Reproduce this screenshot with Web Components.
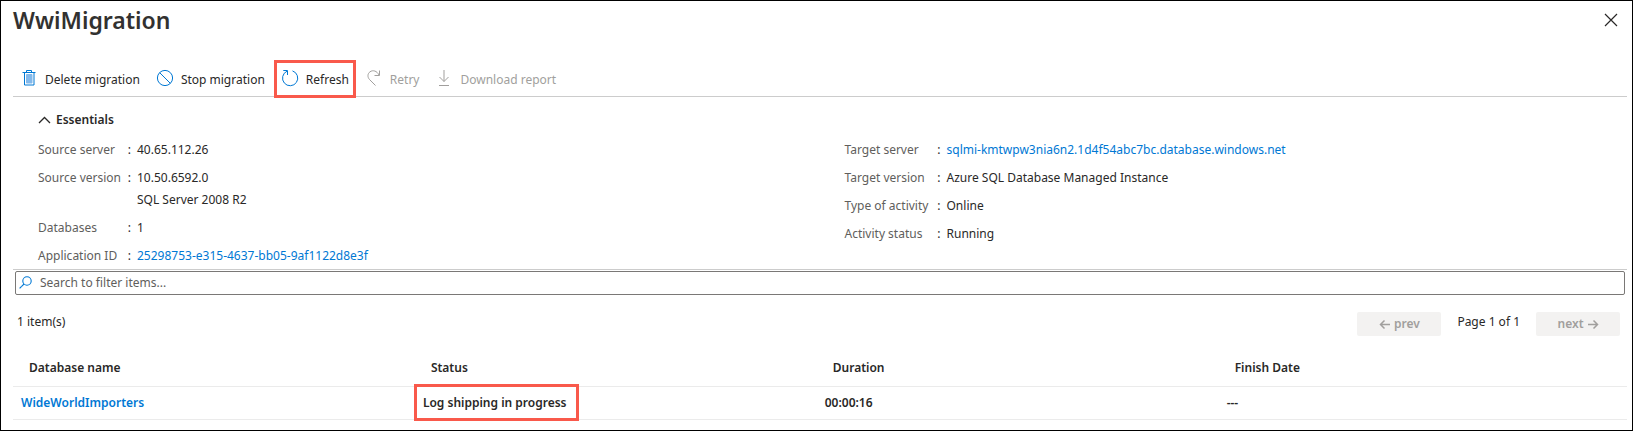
<!DOCTYPE html>
<html lang="en">
<head>
<meta charset="utf-8">
<meta name="viewport" content="width=device-width, initial-scale=1">
<title>WwiMigration</title>
<style>
  :root {
    --text: #292827;
    --muted: #605e5c;
    --disabled: #a19f9d;
    --link: #0078d4;
    --rule: #cccccc;
    --row-rule: #ebebeb;
    --callout: #f9594b;
  }
  * { box-sizing: border-box; }
  body {
    margin: 0;
    background: #fff;
    color: var(--text);
    font: 12px/20px "Noto Sans", "Open Sans", sans-serif;
  }
</style>
</head>
<body>
<migration-blade>
  <span slot="title">WwiMigration</span>
  <command-bar slot="commands">
    <command-button icon="trash">Delete migration</command-button>
    <command-button icon="stop">Stop migration</command-button>
    <command-button icon="refresh" callout>Refresh</command-button>
    <command-button icon="retry" disabled>Retry</command-button>
    <command-button icon="download" disabled>Download report</command-button>
  </command-bar>
  <essentials-panel></essentials-panel>
  <filter-box></filter-box>
  <list-pager></list-pager>
  <database-table></database-table>
</migration-blade>

<template id="migration-blade">
  <style>
    :host { display: block; min-height: 100vh; box-sizing: border-box; border: 1px solid #000; padding: 0 5px 0 12px; }
    header { display: flex; justify-content: space-between; align-items: flex-start; height: 62px; padding-right: 8px; }
    h1 { margin: 0; padding-top: 2px; font-size: 23px; line-height: 34px; font-weight: 600; color: #323130; }
    button { margin: 11px 0 0; padding: 1px; border: 0; background: none; display: flex; }
    svg { width: 14px; height: 14px; }
  </style>
  <header>
    <h1><slot name="title"></slot></h1>
    <button type="button" aria-label="Close"><svg viewBox="0 0 14 14"><path d="M1 1l12 12M13 1L1 13" fill="none" stroke="#292827" stroke-width="1.2"/></svg></button>
  </header>
  <slot name="commands"></slot>
  <main><slot></slot></main>
</template>

<template id="command-bar">
  <style>
    :host { display: block; }
    nav { display: flex; gap: 2px; height: 33px; border-bottom: 1px solid var(--rule); }
  </style>
  <nav aria-label="Commands"><slot></slot></nav>
</template>

<template id="command-button">
  <style>
    :host { display: block; position: relative; }
    button {
      display: flex; align-items: center; gap: 7px; height: 34px; margin: 0; padding: 0 7px;
      border: 0; background: none; color: inherit; font: inherit; white-space: nowrap;
    }
    button:disabled { color: var(--disabled); }
    svg { width: 18px; height: 18px; margin-bottom: 4px; color: var(--link); fill: none; stroke: currentColor; }
    button:disabled svg { color: var(--disabled); }
    :host([callout])::after {
      content: ""; position: absolute; inset: -3px 0 -2px; border: 3px solid var(--callout); pointer-events: none;
    }
  </style>
  <button type="button"><svg viewBox="0 0 18 18" aria-hidden="true"></svg><span><slot></slot></span></button>
</template>

<template id="essentials-panel">
  <style>
    :host { display: block; padding: 13px 0 0 25px; border-bottom: 1px solid var(--rule); }
    h2 { margin: 0; font-size: 12px; line-height: 20px; font-weight: 600; }
    h2 button { display: flex; align-items: center; gap: 5px; margin: 0; padding: 0; border: 0; background: none; color: inherit; font: inherit; }
    svg { width: 13px; height: 13px; }
    .columns { display: grid; grid-template-columns: 1fr 1fr; column-gap: 24px; padding-top: 6px; }
    dl { margin: 0; }
    .row { display: flex; line-height: 22px; padding: 3px 0; }
    .row:last-child { padding-bottom: 2px; }
    dt { display: flex; justify-content: space-between; width: 93px; color: var(--muted); }
    dl.target dt { width: 96px; }
    dt::after { content: ":"; color: var(--text); }
    dd { margin: 0 0 0 6px; }
    a { color: var(--link); text-decoration: none; }
  </style>
  <h2><button type="button" aria-expanded="true"><svg viewBox="0 0 13 13" aria-hidden="true"><path d="M1 9L6.500 3.500 12 9" fill="none" stroke="#292827" stroke-width="1.300"/></svg>Essentials</button></h2>
  <div class="columns">
    <dl class="source">
      <div class="row"><dt>Source server</dt><dd>40.65.112.26</dd></div>
      <div class="row"><dt>Source version</dt><dd>10.50.6592.0<br>SQL Server 2008 R2</dd></div>
      <div class="row"><dt>Databases</dt><dd>1</dd></div>
      <div class="row"><dt>Application ID</dt><dd><a href="#application">25298753-e315-4637-bb05-9af1122d8e3f</a></dd></div>
    </dl>
    <dl class="target">
      <div class="row"><dt>Target server</dt><dd><a href="#server">sqlmi-kmtwpw3nia6n2.1d4f54abc7bc.database.windows.net</a></dd></div>
      <div class="row"><dt>Target version</dt><dd>Azure SQL Database Managed Instance</dd></div>
      <div class="row"><dt>Type of activity</dt><dd>Online</dd></div>
      <div class="row"><dt>Activity status</dt><dd>Running</dd></div>
    </dl>
  </div>
</template>

<template id="filter-box">
  <style>
    :host { display: block; padding: 1px 2px 0; }
    label { display: flex; align-items: center; gap: 8px; height: 24px; box-sizing: border-box; padding: 0 3px; border: 1px solid #7a7876; border-radius: 2px; }
    svg { width: 13px; height: 13px; flex: none; margin-bottom: 2px; }
    input { flex: 1; min-width: 0; margin: 0; padding: 0; border: 0; outline: 0; background: none; font: inherit; color: inherit; }
    input::placeholder { color: var(--muted); opacity: 1; }
  </style>
  <label>
    <svg viewBox="0 0 13 13" aria-hidden="true"><g fill="none" stroke="#0078d4" stroke-width="1.100"><circle cx="8" cy="5" r="4.200"/><path d="M5 8L.6 12.400"/></g></svg>
    <input type="text" aria-label="Search to filter items" placeholder="Search to filter items...">
  </label>
</template>

<template id="list-pager">
  <style>
    :host { display: flex; justify-content: space-between; padding: 17px 7px 0 4px; }
    .count, .page { line-height: 20px; }
    .pages { display: flex; gap: 16px; }
    button {
      display: flex; align-items: center; justify-content: center; gap: 4px; width: 84px; height: 24px; margin: 0; padding: 0;
      border: 0; border-radius: 2px; background: #f3f2f1; color: var(--disabled); font: inherit; font-weight: 600;
    }
    svg { width: 11px; height: 11px; fill: none; stroke: currentColor; stroke-width: 1.500; }
  </style>
  <span class="count">1 item(s)</span>
  <div class="pages">
    <button type="button" disabled><svg viewBox="0 0 11 11" aria-hidden="true"><path d="M11 5.500H1.500M5.500 1.500l-4 4 4 4"/></svg>prev</button>
    <span class="page">Page 1 of 1</span>
    <button type="button" disabled>next<svg viewBox="0 0 11 11" aria-hidden="true"><path d="M0 5.500h9.500M5.500 1.500l4 4-4 4"/></svg></button>
  </div>
</template>

<template id="database-table">
  <style>
    :host { display: block; padding-top: 14px; }
    table { width: 100%; border-collapse: separate; border-spacing: 0; table-layout: fixed; }
    th, td { padding: 0; text-align: left; font-weight: 600; color: var(--text); }
    th { height: 36px; padding-left: 16px; border-bottom: 1px solid var(--row-rule); }
    td { height: 32px; padding-left: 8px; border-bottom: 1px solid var(--row-rule); }
    col.data { width: 24.9%; }
    a { color: var(--link); text-decoration: none; }
    .status { position: relative; }
    .status::after { content: ""; position: absolute; inset: -10px -12px -10px -9px; border: 3px solid var(--callout); pointer-events: none; }
  </style>
  <table>
    <colgroup><col class="data"><col class="data"><col class="data"><col></colgroup>
    <thead><tr><th scope="col">Database name</th><th scope="col">Status</th><th scope="col">Duration</th><th scope="col">Finish Date</th></tr></thead>
    <tbody><tr><td><a href="#database">WideWorldImporters</a></td><td><span class="status">Log shipping in progress</span></td><td>00:00:16</td><td>---</td></tr></tbody>
  </table>
</template>

<script>
  const icons = {
    trash: '<path d="M4.500 4v12h9.500V4M2.500 3.500h13M6.500 3V1.500h5V3"/><path d="M6.500 5.500h5.500v8.500H6.500z" fill="#83b9eb" stroke="#83b9eb"/>',
    stop: '<circle cx="9" cy="9" r="7.600"/><path d="M3.600 3.600l10.800 10.800"/>',
    refresh: '<path d="M11.500 1.900A7.600 7.600 0 1 1 6 2.200M2.300 1.500H6.500V6"/>',
    retry: '<path d="M10.500 16.500L4.500 10.500C2.200 8 2.600 4.500 5 2.800 8 .600 12 2 14 6M14.500 1.500V6.500H9.500"/>',
    download: '<path d="M9 1v11.500M4.500 8L9 12.500 13.500 8M4 16.500h10"/>'
  };

  class TemplateElement extends HTMLElement {
    constructor() {
      super();
      this.attachShadow({ mode: "open" })
        .append(document.getElementById(this.localName).content.cloneNode(true));
    }
  }

  class CommandButton extends TemplateElement {
    connectedCallback() {
      this.shadowRoot.querySelector("svg").innerHTML = icons[this.getAttribute("icon")] || "";
      this.shadowRoot.querySelector("button").disabled = this.hasAttribute("disabled");
    }
  }

  customElements.define("migration-blade", class extends TemplateElement {});
  customElements.define("command-bar", class extends TemplateElement {});
  customElements.define("command-button", CommandButton);
  customElements.define("essentials-panel", class extends TemplateElement {});
  customElements.define("filter-box", class extends TemplateElement {});
  customElements.define("list-pager", class extends TemplateElement {});
  customElements.define("database-table", class extends TemplateElement {});
</script>
</body>
</html>
